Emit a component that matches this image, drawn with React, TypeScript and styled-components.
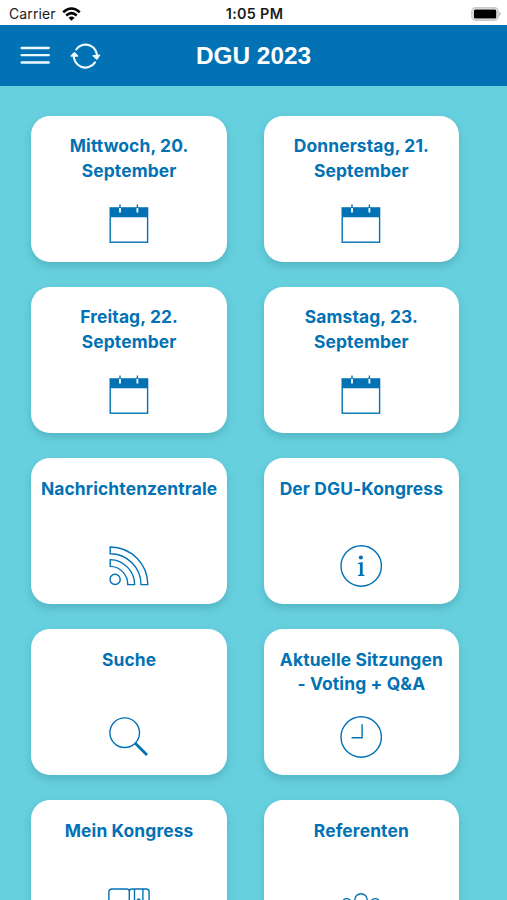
import React from 'react';
import styled, { createGlobalStyle } from 'styled-components';

const BLUE = '#0272b5';

const GlobalStyle = createGlobalStyle`
  * { box-sizing: border-box; }
  html, body { margin: 0; padding: 0; background: #67d0de; }
`;

const Screen = styled.div`
  width: 507px;
  height: 900px;
  overflow: hidden;
  display: flex;
  flex-direction: column;
  background: #67d0de;
  font-family: Inter, 'Liberation Sans', sans-serif;
`;

const StatusBar = styled.div`
  flex: none;
  height: 25.3px;
  display: grid;
  grid-template-columns: 1fr auto 1fr;
  align-items: center;
  padding: 2px 7px 0 9px;
  background: #fff;
  color: #1b1b1b;
`;

const Carrier = styled.div`
  display: flex;
  align-items: center;
  gap: 6px;
  font-size: 14px;
  letter-spacing: 0.1px;
`;

const Time = styled.div`
  font-size: 14.4px;
  font-weight: 600;
  letter-spacing: 0.3px;
`;

const BatterySlot = styled.div`
  display: flex;
  justify-content: flex-end;
  margin-right: -2px;
`;

const NavBar = styled.header`
  flex: none;
  height: 61px;
  display: grid;
  grid-template-columns: 1fr auto 1fr;
  align-items: center;
  padding: 0 20px;
  background: ${BLUE};
  color: #fff;
`;

const NavActions = styled.div`
  display: flex;
  align-items: center;
  gap: 20px;
`;

const NavButton = styled.button`
  display: flex;
  padding: 0;
  border: 0;
  background: none;
  color: #ecfaff;
`;

const Title = styled.h1`
  margin: 0;
  font: bold 24.4px/30px 'Liberation Sans', Arial, sans-serif;
`;

const Grid = styled.main`
  display: grid;
  grid-template-columns: 195.6px 195.6px;
  grid-auto-rows: 146.6px;
  column-gap: 36.7px;
  row-gap: 24.5px;
  padding: 29.3px 0 0 31.3px;
`;

const Card = styled.section`
  display: flex;
  flex-direction: column;
  align-items: center;
  justify-content: space-between;
  padding: 18.8px 0 17.3px;
  border-radius: 19px;
  background: #fff;
  box-shadow: 0 4px 9px rgba(20, 90, 105, 0.24);
  color: ${BLUE};
`;

const CardTitle = styled.h2`
  margin: 0;
  font-size: 17.4px;
  font-weight: 700;
  line-height: 24.5px;
  letter-spacing: 0.13px;
  text-align: center;
  white-space: pre-line;
`;

const CardIcon = styled.svg.attrs({ viewBox: '0 0 42 42' })`
  flex: none;
  width: 42px;
  height: 42px;
  fill: none;
  stroke: currentColor;
  stroke-width: 1.4;
`;

const Calendar = () => (
  <CardIcon>
    <rect x="2.2" y="5" width="37.4" height="34.2" />
    <path d="M2 4.7h38v9.6H2z" fill="currentColor" stroke="none" />
    <path d="M12 1.4v4M29.4 1.4v4" />
    <path d="M12 5v4.4M29.4 5v4.4" stroke="#fff" strokeWidth="1.8" />
  </CardIcon>
);

const Feed = () => (
  <CardIcon>
    <circle cx="7.1" cy="34.4" r="5.1" />
    <path d="M2.2 14.6A25 25 0 0 1 26.6 39.6H19.7A17.8 17.8 0 0 0 2.2 21.4Z" />
    <path d="M2.2 2A37.6 37.6 0 0 1 39.8 39.6H33A30.8 30.8 0 0 0 2.2 8.8Z" />
  </CardIcon>
);

const Info = () => (
  <CardIcon>
    <circle cx="21.2" cy="21" r="20.2" />
    <circle cx="20.9" cy="12.5" r="2.1" fill="currentColor" stroke="none" />
    <path d="M17.8 18.1l4.9-1v12.2l1.8 1v.7h-6.5v-.7l1.9-1v-10l-2.1-.5z" fill="currentColor" stroke="none" />
  </CardIcon>
);

const Search = () => (
  <CardIcon>
    <circle cx="16.7" cy="16.7" r="14.8" />
    <path d="M27.3 27.3l11.7 11.7" strokeWidth="2.8" />
  </CardIcon>
);

const Clock = () => (
  <CardIcon>
    <circle cx="21.2" cy="21" r="20.2" />
    <path d="M22.1 8.2v13.6H11.6" />
  </CardIcon>
);

const Book = () => (
  <CardIcon>
    <path d="M21.3 39V4.2Q21.3 2 18.8 2H4Q.9 2 .9 5v29q0 3 3 3h14q3 0 3.4 2Q22 37 25 37h13.1q3 0 3-3V5q0-3-3-3H24Q21.3 2 21.3 4.2" />
    <path d="M26.5 2v13.5l4.2-3.6 4.2 3.6V2" />
  </CardIcon>
);

const People = () => (
  <CardIcon>
    <circle cx="21" cy="13" r="6.2" />
    <circle cx="6.7" cy="15.8" r="4.2" />
    <circle cx="35.3" cy="15.8" r="4.2" />
    <path d="M10 37v-6c0-6 4-9 11-9s11 3 11 9v6zM10 34H1v-5c0-4 2-6 6-6 2 0 3 .3 4 1M32 34h9v-5c0-4-2-6-6-6-2 0-3 .3-4 1" />
  </CardIcon>
);

const cards = [
  { title: 'Mittwoch, 20.\nSeptember', Icon: Calendar },
  { title: 'Donnerstag, 21.\nSeptember', Icon: Calendar },
  { title: 'Freitag, 22.\nSeptember', Icon: Calendar },
  { title: 'Samstag, 23.\nSeptember', Icon: Calendar },
  { title: 'Nachrichtenzentrale', Icon: Feed },
  { title: 'Der DGU-Kongress', Icon: Info },
  { title: 'Suche', Icon: Search },
  { title: 'Aktuelle Sitzungen\n- Voting + Q&A', Icon: Clock },
  { title: 'Mein Kongress', Icon: Book },
  { title: 'Referenten', Icon: People },
];

const Wifi = () => (
  <svg width="19" height="14" viewBox="0 0 19 14" fill="none" stroke="#000" strokeWidth="2.5">
    <path d="M1.2 5.2Q9.5-2.2 17.8 5.2M4.2 8.5Q9.5 3.8 14.8 8.5" />
    <path d="M6.5 10.7Q9.5 8.3 12.5 10.7L9.5 13.7Z" fill="#000" stroke="none" />
  </svg>
);

const Battery = () => (
  <svg width="31" height="14" viewBox="0 0 31 14">
    <rect x=".9" y=".9" width="26.2" height="12.2" rx="3.6" fill="#fff" stroke="#c9c9c9" strokeWidth="1.6" />
    <rect x="2.8" y="2.5" width="22.5" height="9" rx="1.5" fill="#000" />
    <path d="M28.4 4.8q2.6 2.2 0 4.4z" fill="#aaa" />
  </svg>
);

const Menu = () => (
  <svg width="30" height="22" viewBox="0 0 30 22" fill="none" stroke="currentColor" strokeWidth="2.3" strokeLinecap="round">
    <path d="M1.6 3h27.2M1.6 10.2h27.2M1.6 17.5h27.2" />
  </svg>
);

const Refresh = () => (
  <svg width="32" height="28" viewBox="0 0 32 28" fill="none" stroke="currentColor" strokeWidth="2.1" strokeLinecap="round" strokeLinejoin="round">
    <path d="M6.2 7.5A11.5 11.5 0 0 1 26.9 16.2M25 20.4A11.5 11.5 0 0 1 4.1 11.8" />
    <path d="M23.2 13.8l3.6 3.3 2.8-3.9zM1.2 14l3.2-3.2 3.2 3.2z" fill="currentColor" strokeWidth="1.4" />
  </svg>
);

export default function App() {
  return (
    <>
      <GlobalStyle />
      <Screen>
        <StatusBar>
          <Carrier>Carrier<Wifi /></Carrier>
          <Time>1:05 PM</Time>
          <BatterySlot><Battery /></BatterySlot>
        </StatusBar>
        <NavBar>
          <NavActions>
            <NavButton aria-label="Menü"><Menu /></NavButton>
            <NavButton aria-label="Aktualisieren"><Refresh /></NavButton>
          </NavActions>
          <Title>DGU 2023</Title>
        </NavBar>
        <Grid>
          {cards.map(({ title, Icon }) => (
            <Card key={title}>
              <CardTitle>{title}</CardTitle>
              <Icon />
            </Card>
          ))}
        </Grid>
      </Screen>
    </>
  );
}
